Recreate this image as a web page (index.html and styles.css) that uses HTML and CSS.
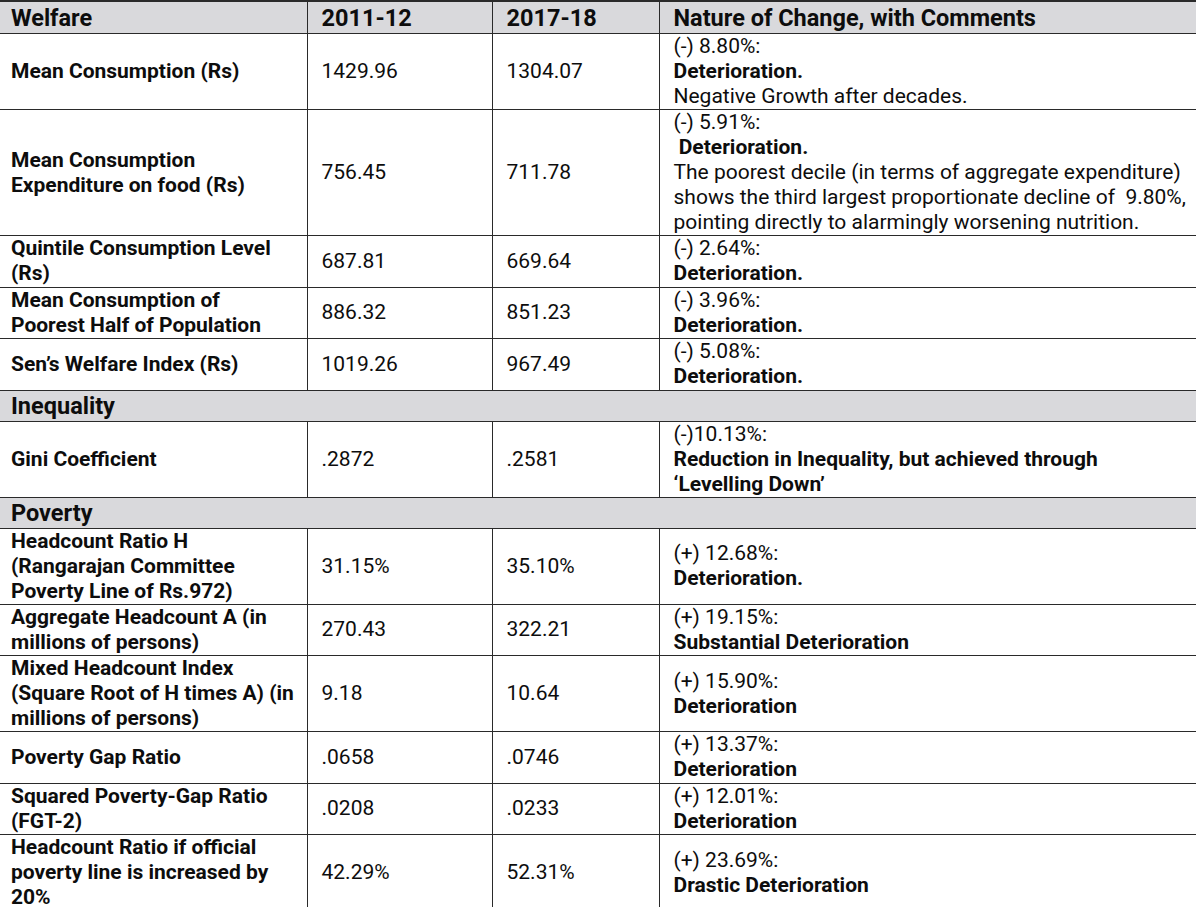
FILE: index.html
```html
<!DOCTYPE html>
<html>
<head>
<meta charset="utf-8">
<link rel="stylesheet" href="styles.css">
</head>
<body>
<table class="welfare">
  <colgroup>
    <col class="c1"><col class="c2"><col class="c3"><col class="c4">
  </colgroup>
  <tr class="head">
    <th>Welfare</th><th>2011-12</th><th>2017-18</th><th>Nature of Change, with Comments</th>
  </tr>
  <tr>
    <td class="lbl">Mean Consumption (Rs)</td><td>1429.96</td><td>1304.07</td>
    <td class="cm">(-) 8.80%:<br><b>Deterioration.</b><br>Negative Growth after decades.</td>
  </tr>
  <tr>
    <td class="lbl">Mean Consumption Expenditure on food (Rs)</td><td>756.45</td><td>711.78</td>
    <td class="cm">(-) 5.91%:<br><b>&nbsp;Deterioration.</b><br>The poorest decile (in terms of aggregate expenditure) shows the third largest proportionate decline of &nbsp;9.80%, pointing directly to alarmingly worsening nutrition.</td>
  </tr>
  <tr>
    <td class="lbl">Quintile Consumption Level (Rs)</td><td>687.81</td><td>669.64</td>
    <td class="cm">(-) 2.64%:<br><b>Deterioration.</b></td>
  </tr>
  <tr>
    <td class="lbl">Mean Consumption of Poorest Half of Population</td><td>886.32</td><td>851.23</td>
    <td class="cm">(-) 3.96%:<br><b>Deterioration.</b></td>
  </tr>
  <tr>
    <td class="lbl">Sen’s Welfare Index (Rs)</td><td>1019.26</td><td>967.49</td>
    <td class="cm">(-) 5.08%:<br><b>Deterioration.</b></td>
  </tr>
  <tr class="section"><th colspan="4">Inequality</th></tr>
  <tr class="tall">
    <td class="lbl">Gini Coefficient</td><td>.2872</td><td>.2581</td>
    <td class="cm">(-)10.13%:<br><b>Reduction in Inequality, but achieved through ‘Levelling Down’</b></td>
  </tr>
  <tr class="section"><th colspan="4">Poverty</th></tr>
  <tr>
    <td class="lbl">Headcount Ratio H (Rangarajan Committee Poverty Line of Rs.972)</td><td>31.15%</td><td>35.10%</td>
    <td class="cm">(+) 12.68%:<br><b>Deterioration.</b></td>
  </tr>
  <tr>
    <td class="lbl">Aggregate Headcount A (in millions of persons)</td><td>270.43</td><td>322.21</td>
    <td class="cm">(+) 19.15%:<br><b>Substantial Deterioration</b></td>
  </tr>
  <tr>
    <td class="lbl">Mixed Headcount Index (Square Root of H times A) (in millions of persons)</td><td>9.18</td><td>10.64</td>
    <td class="cm">(+) 15.90%:<br><b>Deterioration</b></td>
  </tr>
  <tr>
    <td class="lbl">Poverty Gap Ratio</td><td>.0658</td><td>.0746</td>
    <td class="cm">(+) 13.37%:<br><b>Deterioration</b></td>
  </tr>
  <tr>
    <td class="lbl">Squared Poverty-Gap Ratio (FGT-2)</td><td>.0208</td><td>.0233</td>
    <td class="cm">(+) 12.01%:<br><b>Deterioration</b></td>
  </tr>
  <tr>
    <td class="lbl">Headcount Ratio if official poverty line is increased by 20%</td><td>42.29%</td><td>52.31%</td>
    <td class="cm">(+) 23.69%:<br><b>Drastic Deterioration</b></td>
  </tr>
</table>
</body>
</html>
```

FILE: styles.css
```css
html, body {
  margin: 0;
  padding: 0;
  overflow: hidden;
  background: #ffffff;
}

.welfare {
  border-collapse: collapse;
  table-layout: fixed;
  width: 1200px;
  font-family: Roboto, "Liberation Sans", sans-serif;
  color: #0d0d0d;
  font-size: 21px;
  line-height: 25px;
  border-top: 2px solid #2a2a2a;
}

.c1 { width: 307px; }
.c2 { width: 185px; }
.c3 { width: 167px; }
.c4 { width: 541px; }

.welfare td,
.welfare th {
  border: 1px solid #2a2a2a;
  padding: 0 6px 0 14px;
  vertical-align: middle;
  text-align: left;
}

.welfare tr > :first-child {
  padding-left: 11px;
  border-left: none;
}

.head th,
.section th {
  background: #d9d9dc;
  font-weight: 700;
  font-size: 23.5px;
  line-height: 30px;
  height: 30px;
}

.head th {
  height: 31px;
}

.lbl {
  font-weight: 700;
}

.welfare td.lbl {
  padding-right: 11px;
}

.welfare td.cm {
  padding-right: 12px;
}

.welfare td {
  height: 50.5px;
}

.tall td {
  height: 75px;
}

.cm b {
  font-weight: 700;
}
```
